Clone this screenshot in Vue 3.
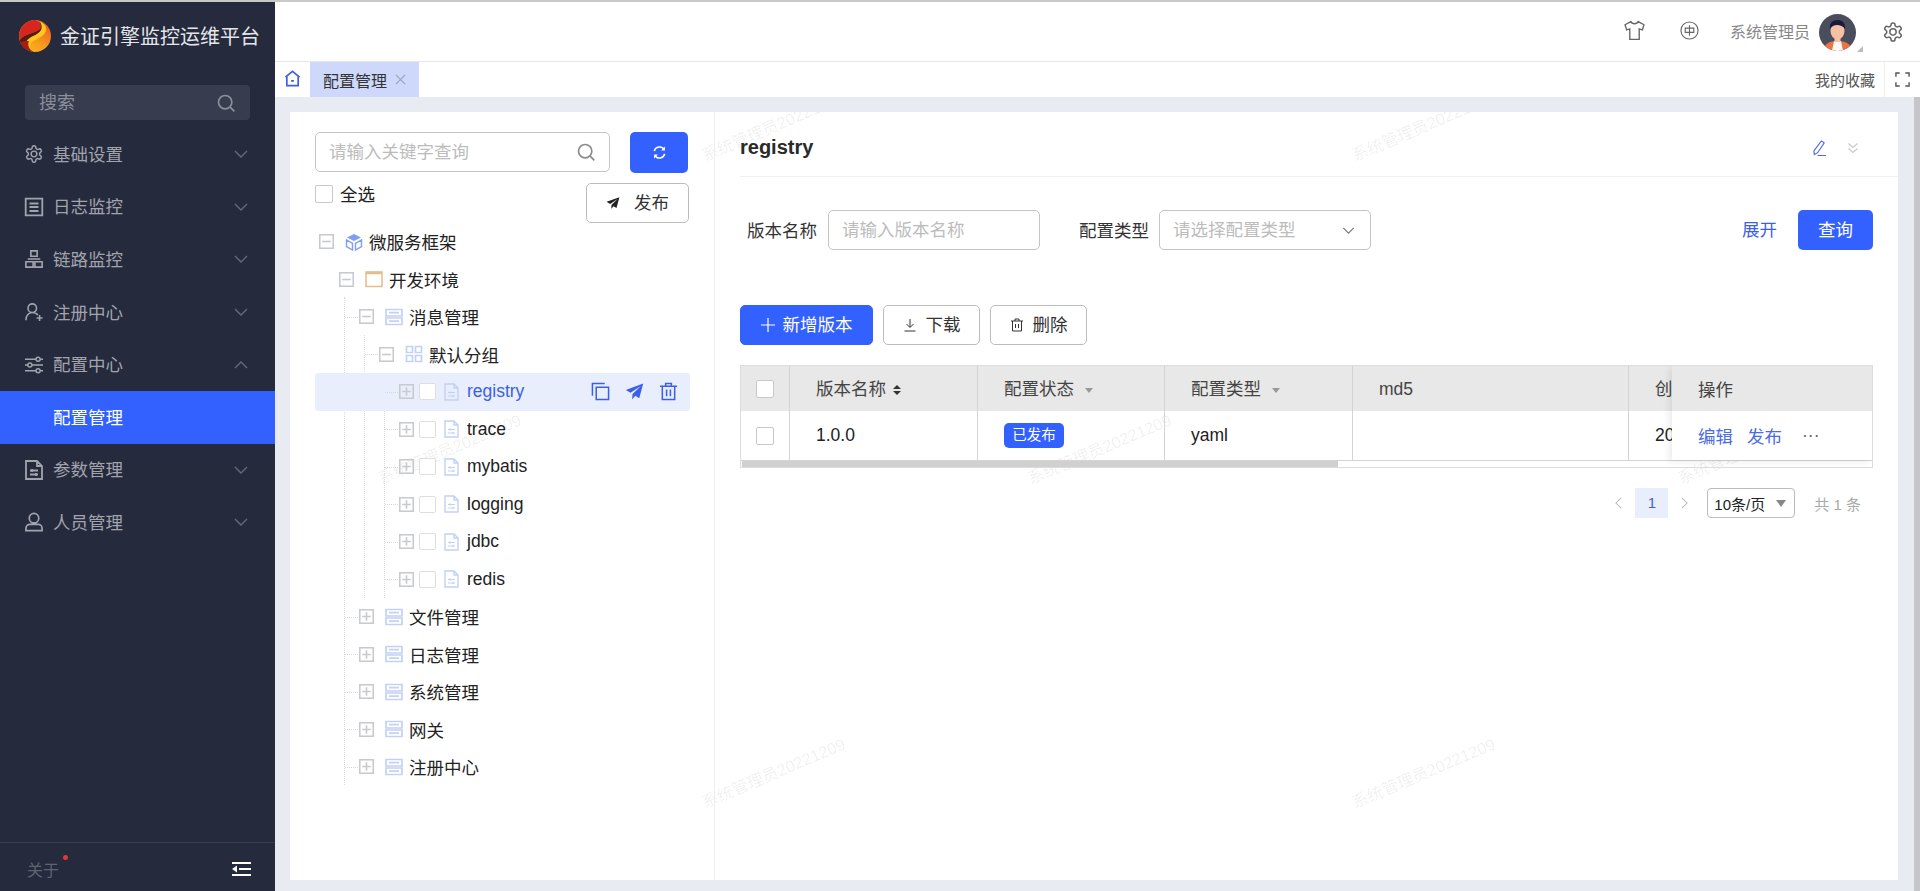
<script setup>
const gear = 'M12.22 2h-.44a2 2 0 0 0-2 2v.18a2 2 0 0 1-1 1.73l-.43.25a2 2 0 0 1-2 0l-.15-.08a2 2 0 0 0-2.73.73l-.22.38a2 2 0 0 0 .73 2.73l.15.1a2 2 0 0 1 1 1.72v.51a2 2 0 0 1-1 1.74l-.15.09a2 2 0 0 0-.73 2.73l.22.38a2 2 0 0 0 2.73.73l.15-.08a2 2 0 0 1 2 0l.43.25a2 2 0 0 1 1 1.73V20a2 2 0 0 0 2 2h.44a2 2 0 0 0 2-2v-.18a2 2 0 0 1 1-1.73l.43-.25a2 2 0 0 1 2 0l.15.08a2 2 0 0 0 2.73-.73l.22-.39a2 2 0 0 0-.73-2.73l-.15-.08a2 2 0 0 1-1-1.74v-.5a2 2 0 0 1 1-1.74l.15-.09a2 2 0 0 0 .73-2.73l-.22-.38a2 2 0 0 0-2.73-.73l-.15.08a2 2 0 0 1-2 0l-.43-.25a2 2 0 0 1-1-1.73V4a2 2 0 0 0-2-2zM12 8.500a3.500 3.500 0 1 0 0 7 3.500 3.500 0 0 0 0-7z'
const menu = [
  { label: '基础设置', vb: '1 1 22 22', d: gear },
  { label: '日志监控', vb: '3 3 18 18', d: 'M3.700 3.700h16.600v16.600H3.700zM7.500 8.500h9M7.500 12h9M7.500 16h9' },
  { label: '链路监控', vb: '2 2 20 20', d: 'M8.500 3h7v6h-7zM3 15h8v6H3zM13 15h8v6h-8zM5 12h14' },
  { label: '注册中心', vb: '2 2 21 21', d: 'M10.500 3a5 5 0 1 0 0 10 5 5 0 0 0 0-10zM3 22c0-5 3-9 7.500-9 3 0 5 1 6.500 3M19 16v7M15.500 19.500h7' },
  { label: '配置中心', vb: '1 1 22 22', open: true, d: 'M1 5h13M20 5h3M1 12h3M10 12h13M1 19h13M20 19h3M17 2.500a2.500 2.500 0 1 0 0 5 2.500 2.500 0 0 0 0-5zM7 9.500a2.500 2.500 0 1 0 0 5 2.500 2.500 0 0 0 0-5zM17 16.500a2.500 2.500 0 1 0 0 5 2.500 2.500 0 0 0 0-5z' },
  { label: '配置管理', sub: true },
  { label: '参数管理', vb: '3 3 18 18', d: 'M4 3h11l5 5v13H4zM15 3v5h5M8 12.500h8M8 16.500h8M10 11v3M14 15v3' },
  { label: '人员管理', vb: '2.500 2.500 19 19', d: 'M12 3a5 5 0 1 0 0 10 5 5 0 0 0 0-10zM3.500 21v-2.500a4 4 0 0 1 4-4h9a4 4 0 0 1 4 4V21z' }
]
const tree = [
  { label: '微服务框架', level: 0, icon: 'cube', open: true },
  { label: '开发环境', level: 1, icon: 'window', open: true },
  { label: '消息管理', level: 2, icon: 'server', open: true },
  { label: '默认分组', level: 3, icon: 'grid', open: true },
  { label: 'registry', level: 4, icon: 'doc', leaf: true, active: true },
  { label: 'trace', level: 4, icon: 'doc', leaf: true },
  { label: 'mybatis', level: 4, icon: 'doc', leaf: true },
  { label: 'logging', level: 4, icon: 'doc', leaf: true },
  { label: 'jdbc', level: 4, icon: 'doc', leaf: true },
  { label: 'redis', level: 4, icon: 'doc', leaf: true },
  { label: '文件管理', level: 2, icon: 'server' },
  { label: '日志管理', level: 2, icon: 'server' },
  { label: '系统管理', level: 2, icon: 'server' },
  { label: '网关', level: 2, icon: 'server' },
  { label: '注册中心', level: 2, icon: 'server' }
]
const marks = [
  [483, 13], [1133, 13],
  [159, 336], [809, 336], [1459, 336],
  [483, 660], [1133, 660]
]
</script>

<template>
  <div class="app">
    <div class="topline"></div>
    <div class="body">
      <aside class="side">
        <div class="brand">
          <svg class="logo" viewBox="0 0 32 32">
            <defs>
              <linearGradient id="lg" x1="0.9" y1="0.1" x2="0.3" y2="1">
                <stop offset="0" stop-color="#ef5a22" />
                <stop offset="0.6" stop-color="#f79a1e" />
                <stop offset="1" stop-color="#f7b51c" />
              </linearGradient>
            </defs>
            <circle cx="16" cy="16" r="16" fill="url(#lg)" />
            <path d="M16 0A16 16 0 0 0 .6 20C6 13 16 14 21 9c2-3 1-7-5-9z" fill="#d6261f" />
            <path d="M.6 20C6 13 16 14 21 9c1.500-2 1-5-1.500-8.500C25 2 28 7 25 11c-4 5-12 6-15 10-2 3-1 7 3 10.500C7 30 2 26 .6 20z" fill="#5a1a14" />
            <path d="M19.500.5C26 3 29 8 26 13c-4 6-14 7-15 12-.5 3 1 5 4.500 7C9 31 6 27 7 22.500 9 16 19 16 22 10c1.500-3.500.500-7-2.500-9.500z" fill="#ffc81e" />
            <path d="M1.500 22.500C4 28 9 31.500 15 32c-3-1.500-5-3.500-5.500-6-.5-3 0-4 .500-5-4 0-7 0-8.500 1.500z" fill="#a81c16" />
          </svg>
          <span class="brand-name">金证引擎监控运维平台</span>
        </div>
        <div class="side-search">
          <span class="lift">搜索</span>
          <svg class="ico20" viewBox="0 0 24 24"><circle cx="11" cy="11" r="8" /><path d="M17 17l5 5" /></svg>
        </div>
        <nav class="menu">
          <div v-for="m in menu" :key="m.label" class="menu-item" :class="{ sub: m.sub }">
            <svg v-if="m.d" class="ico18" :viewBox="m.vb"><path :d="m.d" /></svg>
            <span class="menu-text">{{ m.label }}</span>
            <svg v-if="!m.sub" class="chev" viewBox="0 0 14 8"><path :d="m.open ? 'M1 7l6-6 6 6' : 'M1 1l6 6 6-6'" /></svg>
          </div>
        </nav>
        <div class="side-foot">
          <span class="about">关于<i class="dot"></i></span>
          <svg class="collapse" viewBox="0 0 19 16"><path d="M0 1h19v2H0zM0 13h19v2H0zM7 7h12v2H7zM5 4.500v7L0 8z" /></svg>
        </div>
      </aside>

      <main class="main">
        <header class="head">
          <svg class="tee" viewBox="0 0 20 20"><path d="M6.500 1.500L1 4.500l1.500 5 3-1v10h9v-10l3 1 1.500-5-5.500-3c-1 2.700-6 2.700-7 0z" /></svg>
          <svg class="zh" viewBox="0 0 20 20"><circle cx="10" cy="10" r="9" /><path d="M5.500 7.500h9v4.500h-9zM10 4.500v11" /></svg>
          <span class="user">系统管理员</span>
          <span class="avatar-wrap">
            <svg class="avatar" viewBox="0 0 37 37">
              <defs><clipPath id="ac"><circle cx="18.500" cy="18.500" r="18.500" /></clipPath></defs>
              <g clip-path="url(#ac)">
                <rect width="37" height="37" fill="#4a4d5c" />
                <path d="M4 37c1-7 6-10 14.500-10S32 30 34 37z" fill="#ea7443" />
                <path d="M13 37l2-10h7l2 10z" fill="#fbf7f4" />
                <ellipse cx="18.500" cy="17" rx="7" ry="8.500" fill="#f5c1a4" />
                <rect x="15.500" y="22" width="6" height="6" fill="#f5c1a4" />
                <path d="M11 15c-1-6 3-9 7.500-9S27 9 26 15c-2-3-5-4-8-4-3 0-5 1-7 4z" fill="#1b1a3a" />
              </g>
            </svg>
            <i class="corner"></i>
          </span>
          <svg class="cog" viewBox="1 1 22 22"><path :d="gear" /></svg>
        </header>

        <div class="tabs">
          <div class="home">
            <svg viewBox="0 0 18 18"><path d="M1.500 7.500L9 1.500l7.500 6M3 6.500v10h12v-10M7.500 11.500h3" /></svg>
          </div>
          <div class="tab">
            <span>配置管理</span>
            <svg viewBox="0 0 12 12"><path d="M1 1l10 10M11 1L1 11" /></svg>
          </div>
          <span class="fav">我的收藏</span>
          <div class="full">
            <svg viewBox="0 0 16 16"><path d="M1 5V1h4M11 1h4v4M15 11v4h-4M5 15H1v-4" /></svg>
          </div>
        </div>

        <div class="content">
          <section class="card">
            <span v-for="(p, i) in marks" :key="i" class="mark" :style="{ left: p[0] + 'px', top: p[1] + 'px' }">系统管理员20221209</span>

            <div class="left">
              <div class="tree-top">
                <div class="search">
                  <input placeholder="请输入关键字查询" />
                  <svg class="ico20 grey" viewBox="0 0 24 24"><circle cx="11" cy="11" r="8" /><path d="M17 17l5 5" /></svg>
                </div>
                <button class="refresh">
                  <svg viewBox="0 0 16 16"><path d="M2.500 6.500A5.700 5.700 0 0 1 13 5M13.500 9.500A5.700 5.700 0 0 1 3 11" /><path class="solid" d="M13.800 1.500v4.300H9.700zM2.200 14.500v-4.300h4.100z" /></svg>
                </button>
              </div>
              <div class="tree-sub">
                <label class="all"><i class="box"></i>全选</label>
                <button class="btn publish">
                  <svg class="plane" viewBox="0 0 24 24"><path d="M23 2L1 10l6 3.500L20 5 9.500 15 9 22l4-4.500 5 3z" /></svg>
                  <span class="lift">发布</span>
                </button>
              </div>
              <div class="tree">
                <i class="guide g1"></i><i class="guide g2"></i><i class="guide g3"></i>
                <div
                  v-for="t in tree"
                  :key="t.label + t.level"
                  class="row"
                  :class="{ active: t.active, stub: t.level >= 2 }"
                  :style="{ paddingLeft: 4 + t.level * 20 + 'px' }"
                >
                  <svg class="exp" viewBox="0 0 14 14">
                    <rect x="0.700" y="0.700" width="12.600" height="12.600" />
                    <path :d="t.open ? 'M3 7h8' : 'M3 7h8M7 3v8'" />
                  </svg>
                  <i v-if="t.leaf" class="box small"></i>
                  <svg v-if="t.icon === 'cube'" class="ti cube" viewBox="0 0 18 18">
                    <path class="fill" d="M9 1l7 3.500L9 8 2 4.500z" />
                    <path d="M1.500 7v6.500L7.500 17v-6.500zM16.500 7v6.500L10.500 17v-6.500z" />
                  </svg>
                  <svg v-else-if="t.icon === 'window'" class="ti win" viewBox="0 0 18 18">
                    <path d="M1 2h16v14.500H1z" /><path class="thick" d="M1 3h16" />
                  </svg>
                  <svg v-else-if="t.icon === 'server'" class="ti srv" viewBox="0 0 18 18">
                    <path d="M1 1.500h16v6.500H1zM1 10h16v6.500H1zM4 4.700h10M4 13.200h10" />
                  </svg>
                  <svg v-else-if="t.icon === 'grid'" class="ti srv" viewBox="0 0 18 18">
                    <path d="M1.500 1.500h6v6h-6zM10.500 1.500h6v6h-6zM1.500 10.500h6v6h-6zM10.500 10.500h6v6h-6z" />
                  </svg>
                  <svg v-else class="ti doc" viewBox="0 0 15 18">
                    <path d="M1 1h9l4 4v12H1zM10 1v4h4" /><path class="thin" d="M4 9.500h7M4 13h7M6 8.300v2.400M9 11.800v2.400" />
                  </svg>
                  <span class="label">{{ t.label }}</span>
                  <div v-if="t.active" class="acts">
                    <svg viewBox="0 0 20 20"><path d="M5.500 5.500h13v13h-13zM1.500 14.500V1.500h13" /></svg>
                    <svg class="send" viewBox="0 0 24 24"><path d="M23 2L1 10l6 3.500L20 5 9.500 15 9 22l4-4.500 5 3z" /></svg>
                    <svg viewBox="0 0 20 20"><path d="M1 4.500h18M7 4.500V1.500h6v3M3.500 4.500v14h13v-14M8 8v7M12 8v7" /></svg>
                  </div>
                </div>
              </div>
            </div>

            <div class="right">
              <div class="title">
                <strong>registry</strong>
                <svg class="pen" viewBox="0 0 16 18"><path d="M10 1.500l3 2L6 14l-3.500 2-.500-4zM6 17h9" /></svg>
                <svg class="dbl" viewBox="0 0 12 12"><path d="M1.500 1.500L6 5.500l4.500-4M1.500 6.500L6 10.500l4.500-4" /></svg>
              </div>
              <div class="pane">
                <div class="form">
                  <span class="flabel">版本名称</span>
                  <input class="finput" placeholder="请输入版本名称" />
                  <span class="flabel second">配置类型</span>
                  <div class="fselect">
                    <input class="finput" placeholder="请选择配置类型" />
                    <svg viewBox="0 0 14 8"><path d="M1 1l6 6 6-6" /></svg>
                  </div>
                  <a class="link">展开</a>
                  <button class="query"><span class="lift">查询</span></button>
                </div>

                <div class="ops">
                  <button class="btn add"><svg viewBox="0 0 14 14"><path d="M7 0v14M0 7h14" /></svg><span class="lift">新增版本</span></button>
                  <button class="btn dl"><svg viewBox="0 0 14 14"><path d="M7 1v8M3.500 6L7 9.500 10.500 6M1.500 13h11" /></svg><span class="lift">下载</span></button>
                  <button class="btn dl"><svg viewBox="0 0 14 14"><path d="M1 3h12M5 3V1h4v2M2.500 3v10h9V3M5.500 6v4M8.500 6v4" /></svg><span class="lift">删除</span></button>
                </div>

                <div class="tbl-wrap">
                  <table class="tbl">
                    <colgroup>
                      <col style="width:49px" /><col style="width:188px" /><col style="width:187px" />
                      <col style="width:188px" /><col style="width:276px" /><col style="width:250px" />
                    </colgroup>
                    <thead>
                      <tr>
                        <th class="c"><i class="box"></i></th>
                        <th>版本名称 <i class="sort"></i></th>
                        <th>配置状态 <i class="tri"></i></th>
                        <th>配置类型 <i class="tri"></i></th>
                        <th class="md5">md5</th>
                        <th>创建时间</th>
                      </tr>
                    </thead>
                    <tbody>
                      <tr>
                        <td class="c"><i class="box"></i></td>
                        <td>1.0.0</td>
                        <td><span class="tag">已发布</span></td>
                        <td>yaml</td>
                        <td></td>
                        <td>2022</td>
                      </tr>
                    </tbody>
                  </table>
                  <div class="thumb"></div>
                  <div class="fixed">
                    <div class="fh">操作</div>
                    <div class="fb"><a>编辑</a><a>发布</a><span class="more">···</span></div>
                  </div>
                </div>

                <div class="pager">
                  <svg viewBox="0 0 8 14"><path d="M7 1L1 7l6 6" /></svg>
                  <span class="page">1</span>
                  <svg viewBox="0 0 8 14"><path d="M1 1l6 6-6 6" /></svg>
                  <div class="psize"><span>10条/页</span><i class="tri dark"></i></div>
                  <span class="total">共 1 条</span>
                </div>
              </div>
            </div>
          </section>
          <div class="sbar"></div>
        </div>
      </main>
    </div>
  </div>
</template>

<style>
html, body { margin: 0; background: #fff; }
</style>

<style scoped>
.app { height: 891px; display: flex; flex-direction: column; overflow: hidden; font-family: "Liberation Sans", "Noto Sans CJK SC", sans-serif; font-size: 17.5px; color: #222; }
.topline { height: 2px; background: #c8c8c8; flex: none; }
.body { flex: 1; display: flex; min-height: 0; }
svg { fill: none; stroke: currentColor; flex: none; display: block; }
.lift { position: relative; top: -2px; }

.side { width: 275px; flex: none; background: #252a3d; display: flex; flex-direction: column; color: #a2a4ad; }
.brand { height: 68px; display: flex; align-items: center; padding-left: 19px; gap: 9px; flex: none; }
.logo { width: 32px; height: 32px; stroke: none; }
.logo path { stroke: none; }
.brand-name { font-size: 20px; color: #e4e6ea; white-space: nowrap; position: relative; top: -1px; }
.side-search { margin: 15px 25px 0; height: 35px; background: #373c4f; border-radius: 4px; display: flex; align-items: center; justify-content: space-between; padding: 0 14px 0 14px; font-size: 18px; color: #8c8f9a; }
.ico20 { width: 20px; height: 20px; stroke-width: 2; }
.ico18 { width: 18px; height: 18px; stroke-width: 1.800; overflow: visible; }
.menu { margin-top: 8px; }
.menu-item { height: 52.600px; display: flex; align-items: center; padding: 0 27px 0 25px; gap: 10px; }
.menu-text { position: relative; top: -1px; }
.menu-item.sub { background: #3361ff; color: #fff; padding-left: 53px; }
.chev { width: 14px; height: 8px; margin-left: auto; stroke: #666b79; stroke-width: 1.400; }
.side-foot { margin-top: auto; height: 44px; border-top: 1px solid #383d50; display: flex; align-items: center; justify-content: space-between; padding: 4px 24px 0 27px; flex: none; box-sizing: content-box; }
.about { position: relative; font-size: 16px; color: #5f636f; }
.dot { position: absolute; top: -2px; right: -9px; width: 5px; height: 5px; background: #e0383e; border-radius: 50%; }
.collapse { width: 19px; height: 16px; fill: #fff; stroke: none; }

.main { flex: 1; min-width: 0; display: flex; flex-direction: column; }
.head { height: 59px; flex: none; border-bottom: 1px solid #e6e6e6; display: flex; align-items: center; justify-content: flex-end; padding-right: 17px; box-sizing: content-box; }
.tee { width: 21px; height: 21px; color: #666; stroke-width: 1.300; margin-bottom: 3px; }
.zh { width: 19px; height: 19px; color: #666; stroke-width: 1.200; margin-left: 35px; margin-bottom: 3px; }
.user { font-size: 16px; color: #888; margin-left: 31px; position: relative; top: -1px; }
.avatar-wrap { position: relative; margin-left: 9px; margin-right: 7px; }
.avatar { width: 37px; height: 37px; stroke: none; margin-top: 2px; }
.avatar path, .avatar ellipse, .avatar rect { stroke: none; }
.corner { position: absolute; right: -7px; bottom: -1px; border-style: solid; border-width: 0 0 6px 6px; border-color: transparent transparent #bbb transparent; }
.cog { width: 20px; height: 20px; color: #666; stroke-width: 1.700; margin-left: 20px; }

.tabs { height: 35px; flex: none; display: flex; align-items: center; background: #fff; }
.home { width: 35px; display: flex; justify-content: center; color: #3f5fe0; margin-top: -2px; }
.home svg { width: 17px; height: 17px; stroke-width: 1.800; }
.tab { height: 35px; width: 109px; box-sizing: border-box; background: #ced8fb; display: flex; align-items: center; padding-left: 13px; gap: 8px; font-size: 16px; color: #333; }
.tab svg { width: 11px; height: 11px; color: #9aa3bf; stroke-width: 1.300; }
.fav { margin-left: auto; font-size: 15px; color: #555; }
.full { width: 35px; height: 35px; margin-left: 9px; border-left: 1px solid #eee; display: flex; align-items: center; justify-content: center; color: #555; }
.full svg { width: 15px; height: 15px; stroke-width: 1.500; }

.content { flex: 1; min-height: 0; background: #e8ebf1; display: flex; padding: 15px 0 11px 15px; position: relative; }
.card { width: 1608px; background: #fff; display: flex; position: relative; overflow: hidden; flex: none; }
.sbar { position: absolute; right: 0; top: 0; bottom: 0; width: 6px; background: #c4c6ca; }
.mark { position: absolute; transform: translate(-50%, -50%) rotate(-23deg); font-size: 16.300px; color: rgba(0, 0, 0, 0.07); white-space: nowrap; }

.left { width: 425px; flex: none; box-sizing: border-box; border-right: 1px solid #eceef2; padding: 20px 0 0 25px; position: relative; }
.tree-top { display: flex; gap: 20px; }
.search { width: 295px; height: 40px; box-sizing: border-box; border: 1px solid #c4c4c4; border-radius: 5px; display: flex; align-items: center; padding-right: 13px; }
.search input, .finput { border: 0; outline: 0; background: transparent; font: inherit; color: #222; min-width: 0; flex: 1; padding: 0 0 0 13px; }
.search input::placeholder, .finput::placeholder { color: #bcbcbc; }
.grey { color: #8b8b8b; }
.refresh { width: 58px; height: 41px; border: 0; background: #3361ff; border-radius: 5px; color: #fff; display: flex; align-items: center; justify-content: center; padding: 0; }
.refresh svg { width: 15px; height: 15px; stroke-width: 1.700; }
.refresh .solid { fill: #fff; stroke: none; }
.tree-sub { display: flex; justify-content: space-between; align-items: flex-start; width: 374px; margin-top: 10px; }
.all { display: flex; align-items: center; gap: 7px; margin-top: 1px; height: 19px; }
.box { display: inline-block; width: 18px; height: 18px; box-sizing: border-box; border: 1px solid #c8c8c8; border-radius: 2px; background: #fff; flex: none; }
.btn { height: 40px; box-sizing: border-box; background: #fff; border: 1px solid #bcbcbc; border-radius: 5px; font: inherit; color: #333; display: inline-flex; align-items: center; justify-content: center; padding: 0; }
.publish { width: 103px; gap: 14px; }
.plane { width: 14px; height: 14px; fill: #222; stroke: none; }

.tree { position: relative; width: 375px; }
.guide { position: absolute; width: 0; border-left: 1px dotted #dcdcdc; }
.g1 { left: 29px; top: 74px; height: 488px; }
.g2 { left: 49px; top: 112px; height: 263px; }
.g3 { left: 69px; top: 150px; height: 225px; }
.row { height: 37.500px; display: flex; align-items: center; position: relative; box-sizing: border-box; border-radius: 3px; }
.row.active { background: #e9eefd; color: #3c5fe6; }
.row.stub::before { content: ""; position: absolute; top: 50%; width: 13px; border-top: 1px dotted #d8d8d8; margin-left: -14px; }
.exp { width: 15px; height: 15px; color: #c8cace; stroke-width: 1.500; }
.box.small { width: 17px; height: 17px; margin-left: 5px; margin-right: -3px; border-color: #dedede; }
.ti { width: 18px; height: 18px; margin-left: 11px; }
.cube { color: #7f9ff0; stroke-width: 1.400; }
.cube .fill { fill: #7f9ff0; stroke: none; }
.win { color: #e3bd8a; stroke-width: 1.500; }
.thick { stroke-width: 2.500; }
.srv { color: #c4d1f6; stroke-width: 1.700; }
.doc { width: 15px; color: #c4d1f6; stroke-width: 1.400; }
.doc .thin { stroke-width: 1.100; }
.label { margin-left: 6px; white-space: nowrap; }
.ti.doc + .label { margin-left: 8px; }
.acts { margin-left: auto; display: flex; align-items: center; gap: 15px; padding-right: 12px; color: #3c5fe6; }
.acts svg { width: 19px; height: 19px; stroke-width: 1.600; }
.acts .send { fill: #3c5fe6; stroke: none; }

.right { flex: 1; min-width: 0; position: relative; }
.title { height: 57px; padding-top: 7px; margin-left: 25px; border-bottom: 1px solid #eef0f3; display: flex; align-items: center; padding-right: 39px; }
.title strong { font-size: 20px; color: #2a2a2a; margin-right: auto; }
.pen { width: 15px; height: 18px; color: #5068e0; stroke-width: 1.200; }
.dbl { width: 12px; height: 12px; color: #c8c8c8; stroke-width: 1.200; margin-left: 20px; }
.pane { padding: 0 25px; }
.form { display: flex; align-items: center; height: 40px; margin-top: 33px; padding-left: 7px; }
.flabel { width: 70px; margin-right: 11px; white-space: nowrap; color: #333; position: relative; top: -1px; }
.flabel.second { margin-left: 39px; margin-right: 10px; }
.finput { width: 212px; flex: none; height: 40px; box-sizing: border-box; border: 1px solid #c4c4c4; border-radius: 5px; }
.fselect { position: relative; width: 212px; }
.fselect svg { position: absolute; right: 16px; top: 17px; width: 13px; height: 7px; color: #777; stroke-width: 1.300; }
.link { margin-left: auto; color: #3f5fe0; margin-right: 21px; position: relative; top: -2px; }
.query { width: 75px; height: 40px; border: 0; background: #3361ff; color: #fff; border-radius: 5px; font: inherit; padding: 0; }
.ops { display: flex; gap: 10px; margin-top: 55px; }
.add { width: 133px; background: #3361ff; border-color: #3361ff; color: #fff; gap: 8px; }
.add svg { width: 14px; height: 14px; stroke-width: 1.200; }
.dl { width: 97px; gap: 9px; }
.dl svg { width: 14px; height: 14px; stroke-width: 1; }

.tbl-wrap { position: relative; margin-top: 20px; height: 103px; box-sizing: border-box; border: 1px solid #dcdcdc; overflow: hidden; }
.tbl { border-collapse: separate; border-spacing: 0; table-layout: fixed; width: 1138px; }
.tbl th, .tbl td { text-align: left; padding: 0 0 0 26px; font-weight: 400; border-right: 1px solid #d4d4d4; box-sizing: border-box; }
.tbl th { height: 45px; background: #e8e8e8; color: #444; padding-bottom: 2px; }
.tbl th.md5 { padding-top: 2px; padding-bottom: 0; }
.tbl td { height: 50px; border-bottom: 1px solid #d4d4d4; }
.tbl th.c, .tbl td.c { padding: 0 0 0 15px; }
.tbl .box { display: block; }
.sort { display: inline-block; width: 8px; height: 10px; margin-left: 2px; position: relative; }
.sort::before, .sort::after { content: ""; position: absolute; left: 0; border-left: 4px solid transparent; border-right: 4px solid transparent; }
.sort::before { top: 0; border-bottom: 4px solid #333; }
.sort::after { bottom: 0; border-top: 4px solid #333; }
.tri { display: inline-block; border-left: 4px solid transparent; border-right: 4px solid transparent; border-top: 5px solid #999; margin-left: 6px; vertical-align: middle; }
.tri.dark { border-left-width: 5px; border-right-width: 5px; border-top-width: 7px; border-top-color: #888; }
.tag { display: inline-block; width: 60px; height: 25px; line-height: 24px; text-align: center; font-size: 14.500px; background: #3361ff; color: #fff; border-radius: 5px; }
.thumb { position: absolute; left: 1px; bottom: 0; height: 6px; width: 596px; background: #d0d0d0; }
.fixed { position: absolute; top: 0; right: 0; width: 200px; height: 94px; background: #fff; box-shadow: -3px 2px 7px rgba(0, 0, 0, 0.08); }
.fh { height: 45px; background: #e8e8e8; display: flex; align-items: center; padding-left: 26px; color: #444; }
.fb { height: 49px; display: flex; align-items: center; padding-left: 26px; gap: 14px; color: #4a6ce6; }
.more { color: #666; margin-left: 6px; letter-spacing: 0; }

.pager { display: flex; align-items: center; justify-content: flex-end; margin-top: 20px; height: 30px; font-size: 15px; padding-right: 12px; }
.pager > svg { width: 7px; height: 12px; color: #bbb; stroke-width: 1.200; }
.page { width: 33px; height: 30px; line-height: 30px; text-align: center; background: #e9eefd; color: #3f5fe0; margin: 0 13px 0 13px; }
.psize { width: 88px; height: 30px; box-sizing: border-box; border: 1px solid #bcbcbc; border-radius: 4px; display: flex; align-items: center; justify-content: space-between; padding: 0 8px 0 6px; margin-left: 19px; }
.total { margin-left: 19px; color: #aaa; }
</style>
